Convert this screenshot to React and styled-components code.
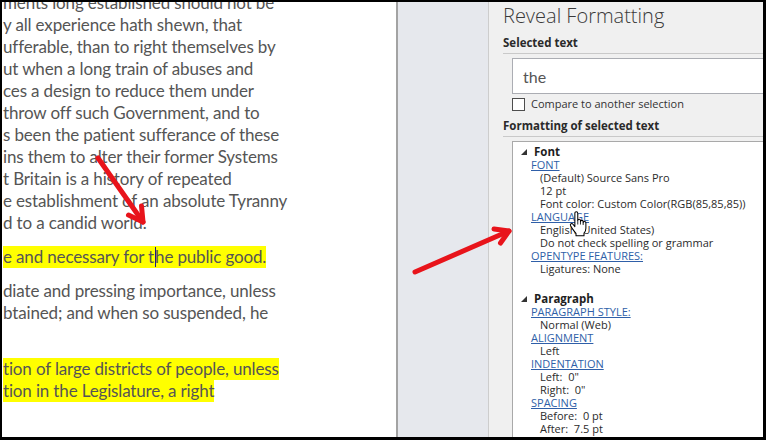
import React from "react";
import styled, { createGlobalStyle } from "styled-components";

const Global = createGlobalStyle`
  html, body { margin: 0; padding: 0; background: #000; }
  #root { width: 766px; height: 440px; }
`;

const Frame = styled.div`
  position: relative;
  width: 766px;
  height: 440px;
  box-sizing: border-box;
  background: #000;
  padding: 2px 3px 3px 2px;
  display: flex;
  overflow: hidden;
`;

const Doc = styled.div`
  flex: none;
  width: 394px;
  background: #fff;
  border-right: 2px solid #a3a3a3;
  overflow: hidden;
`;

const DocText = styled.div`
  margin-top: -10px;
  padding-left: 1px;
  font-family: Lato, "Liberation Sans", sans-serif;
  font-size: 17px;
  letter-spacing: -0.15px;
  line-height: 22px;
  color: #555555;
  white-space: nowrap;
`;

const Para = styled.div`
  margin-bottom: 12px;
`;

const Line = styled.div`
  height: 22px;
`;

const Mark = styled.span`
  display: inline-block;
  height: 22px;
  background: #ffff00;
`;

const Caret = styled.span`
  display: inline-block;
  width: 1px;
  height: 20px;
  margin: 0 -0.5px 0 0.5px;
  background: #1a1a8c;
  vertical-align: -4px;
`;

const Strip = styled.div`
  flex: none;
  width: 90px;
  background: #e6e8ed;
  border-right: 1px solid #cdcdcd;
`;

const Pane = styled.div`
  flex: 1;
  min-width: 0;
  background: #f0f0f0;
  overflow: hidden;
  padding: 1px 0 0 14px;
  font-family: "Open Sans", "Noto Sans", sans-serif;
  color: #262626;
`;

const Title = styled.div`
  font-size: 20px;
  font-weight: 300;
  line-height: 26px;
  color: #3a3a3a;
  white-space: nowrap;
`;

const Heading = styled.div`
  font-size: 11.5px;
  font-weight: 700;
  line-height: 16px;
  color: #2a2a2a;
  padding-top: ${(p) => p.$top || 0}px;
  padding-bottom: 2px;
  border-bottom: 1px solid #c9c9c9;
  white-space: nowrap;
`;

const SelBox = styled.div`
  margin: 4px 0 0 9px;
  width: 300px;
  height: 34px;
  background: #fff;
  border: 1px solid #abadb3;
  display: flex;
  align-items: center;
  padding-left: 10px;
  font-family: Lato, sans-serif;
  font-size: 16px;
  color: #555;
`;

const CheckRow = styled.label`
  display: flex;
  align-items: center;
  gap: 6px;
  margin: 3px 0 0 9px;
  font-size: 11px;
  line-height: 14px;
  color: #333;
  white-space: nowrap;
`;

const CheckBox = styled.span`
  width: 11px;
  height: 11px;
  border: 1px solid #4d4d4d;
  background: #fff;
  flex: none;
`;

const FormatBox = styled.div`
  margin: 4px 0 0 9px;
  width: 300px;
  height: 320px;
  background: #fff;
  border: 1px solid #a9a9a9;
  padding-top: 3px;
  box-sizing: border-box;
  font-size: 11px;
  line-height: 13px;
`;

const Group = styled.div`
  margin-top: ${(p) => (p.$first ? 0 : 17)}px;
`;

const GroupHead = styled.div`
  display: flex;
  align-items: center;
  height: 13px;
  padding-left: 8px;
  gap: 7px;
  font-weight: 700;
  color: #1e1e1e;
  font-size: 11.5px;
`;

const LinkRow = styled.div`
  height: 13px;
  padding-left: 18px;
  white-space: nowrap;
  position: relative;
  & > span {
    color: #2f5fa8;
    text-decoration: underline;
    text-underline-offset: 1px;
  }
`;

const ValueRow = styled.div`
  height: 13px;
  padding-left: 27px;
  color: #2b2b2b;
  white-space: pre;
`;

const Overlay = styled.svg`
  position: absolute;
  left: 0;
  top: 0;
  pointer-events: none;
`;

const HandCursor = styled.svg`
  position: absolute;
  left: 56px;
  top: 1px;
`;

const Tri = () => (
  <svg width="6" height="6" viewBox="0 0 6 6">
    <polygon points="6,0 6,6 0,6" fill="#333" />
  </svg>
);

const docParas = [
  {
    lines: [
      "ments long established should not be",
      "y all experience hath shewn, that",
      "ufferable, than to right themselves by",
      "ut when a long train of abuses and",
      "ces a design to reduce them under",
      "throw off such Government, and to",
      "s been the patient sufferance of these",
      "ins them to alter their former Systems",
      "t Britain is a history of repeated",
      "e establishment of an absolute Tyranny",
      "d to a candid world.",
    ],
  },
  { caret: true },
  {
    lines: [
      "diate and pressing importance, unless",
      "btained; and when so suspended, he",
      "",
    ],
  },
  {
    mark: true,
    lines: [
      "tion of large districts of people, unless",
      "tion in the Legislature, a right",
    ],
  },
];

const fontRows = [
  { link: "FONT" },
  { v: "(Default) Source Sans Pro" },
  { v: "12 pt" },
  { v: "Font color: Custom Color(RGB(85,85,85))" },
  { link: "LANGUAGE", hand: true },
  { v: "English (United States)" },
  { v: "Do not check spelling or grammar" },
  { link: "OPENTYPE FEATURES:" },
  { v: "Ligatures: None" },
];

const paraRows = [
  { link: "PARAGRAPH STYLE:" },
  { v: "Normal (Web)" },
  { link: "ALIGNMENT" },
  { v: "Left" },
  { link: "INDENTATION" },
  { v: "Left:  0\"" },
  { v: "Right:  0\"" },
  { link: "SPACING" },
  { v: "Before:  0 pt" },
  { v: "After:  7.5 pt" },
  { v: "Line spacing:  Multiple 1.08 li" },
];

const Rows = ({ rows }) =>
  rows.map((r, i) =>
    r.link ? (
      <LinkRow key={i}>
        <span>{r.link}</span>
        {r.hand && (
          <HandCursor width="19" height="26" viewBox="0 0 18 25">
            <path
              d="M5.5 2.2C5.5 1.3 6.1 0.7 6.9 0.7C7.7 0.7 8.3 1.3 8.3 2.2V9.2C8.3 8.5 8.9 8 9.6 8C10.3 8 10.9 8.5 10.9 9.2V10.2C10.9 9.5 11.5 9 12.2 9C12.9 9 13.5 9.5 13.5 10.2V11.2C13.5 10.5 14.1 10 14.8 10C15.5 10 16.1 10.5 16.1 11.2V16.5C16.1 18.8 15.2 20.3 14.3 21.3V23.8H6.6V21.6C5.6 20.6 4.6 19.2 3.6 17.7L1.4 14.2C1 13.5 1.2 12.7 1.8 12.3C2.4 11.9 3.2 12.1 3.7 12.7L5.5 15Z"
              fill="#fff"
              stroke="#000"
              strokeWidth="1"
              strokeLinejoin="round"
            />
            <path d="M8.3 9.2V13M10.9 10.2V13M13.5 11.2V13.5" stroke="#000" strokeWidth="0.8" fill="none" />
          </HandCursor>
        )}
      </LinkRow>
    ) : (
      <ValueRow key={i}>{r.v}</ValueRow>
    )
  );

export default function App() {
  return (
    <>
      <Global />
      <Frame>
        <Doc>
          <DocText>
            {docParas.map((p, i) => (
              <Para key={i}>
                {p.caret ? (
                  <Line>
                    <Mark>
                      e and necessary for t<Caret />he public good.
                    </Mark>
                  </Line>
                ) : (
                  p.lines.map((l, j) => (
                    <Line key={j}>{p.mark ? <Mark>{l}</Mark> : l}</Line>
                  ))
                )}
              </Para>
            ))}
          </DocText>
        </Doc>
        <Strip />
        <Pane>
          <Title>Reveal Formatting</Title>
          <Heading $top={6}>Selected text</Heading>
          <SelBox>the</SelBox>
          <CheckRow>
            <CheckBox />
            Compare to another selection
          </CheckRow>
          <Heading $top={7}>Formatting of selected text</Heading>
          <FormatBox>
            <Group $first>
              <GroupHead>
                <Tri />
                Font
              </GroupHead>
              <Rows rows={fontRows} />
            </Group>
            <Group>
              <GroupHead>
                <Tri />
                Paragraph
              </GroupHead>
              <Rows rows={paraRows} />
            </Group>
          </FormatBox>
        </Pane>
        <Overlay width="766" height="440" viewBox="0 0 766 440">
          <g stroke="#e8141b" strokeWidth="5" strokeLinecap="round" strokeLinejoin="round" fill="none">
            <line x1="98" y1="158" x2="143" y2="222" />
            <polyline points="141.5,206 143,222 128.5,215" />
            <line x1="415" y1="272" x2="509" y2="231" />
            <polyline points="494,229 509,231 500.5,243" />
          </g>
        </Overlay>
      </Frame>
    </>
  );
}
